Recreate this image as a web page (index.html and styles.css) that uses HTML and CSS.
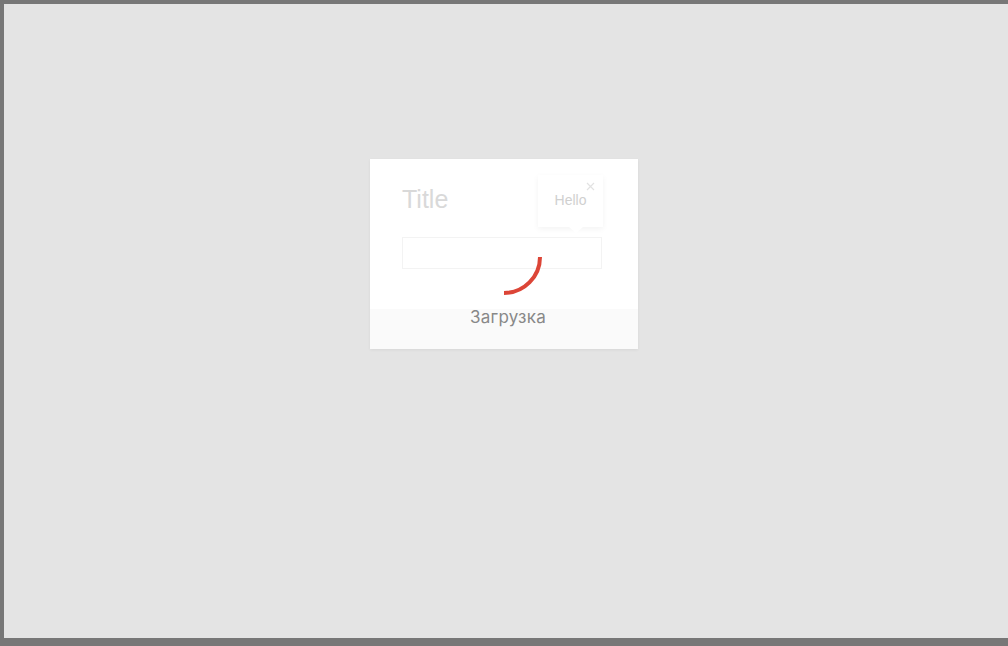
FILE: index.html
```html
<!DOCTYPE html>
<html>
<head>
<meta charset="utf-8">
<link rel="stylesheet" href="styles.css">
</head>
<body>
<div class="frame">
  <div class="modal">
    <div class="modal-body">
      <div class="title">Title</div>
      <div class="input"></div>
    </div>
    <div class="modal-footer"></div>
    <div class="tooltip">
      <span class="tooltip-text">Hello</span>
      <svg class="tooltip-close" width="9" height="9" viewBox="0 0 9 9"><path d="M1 1L8 8M8 1L1 8" stroke="#e2e2e2" stroke-width="1.2" fill="none"/></svg>
      <span class="tooltip-arrow"></span>
    </div>
    <div class="loader">
      <svg class="spinner" width="80" height="80" viewBox="0 0 80 80"><path d="M76 40A36 36 0 0 1 40 76" stroke="#dc4537" stroke-width="4" fill="none"/></svg>
      <div class="loader-text">Загрузка</div>
    </div>
  </div>
</div>
</body>
</html>
```
FILE: styles.css
```css
html, body {
  margin: 0;
  padding: 0;
}
body {
  font-family: "Liberation Sans", Arial, sans-serif;
}
.frame {
  box-sizing: border-box;
  height: 646px;
  width: 1008px;
  background: #e4e4e4;
  border-top: 4px solid #777777;
  border-left: 4px solid #777777;
  border-bottom: 8px solid #777777;
  padding: 155px 0 0 366px;
}
.modal {
  position: relative;
  width: 268px;
  height: 190px;
  background: #ffffff;
  box-shadow: 0 1px 3px rgba(0,0,0,0.06);
  display: flex;
  flex-direction: column;
}
.modal-body {
  flex: 1;
  padding: 25px 36px 0 32px;
}
.title {
  font-size: 25px;
  line-height: 30px;
  color: #d9d9d9;
  height: 30px;
}
.input {
  margin-top: 23px;
  width: 198px;
  height: 30px;
  border: 1px solid #f3f3f3;
}
.modal-footer {
  height: 40px;
  background: #fafafa;
}
.tooltip {
  position: absolute;
  left: 168px;
  top: 16px;
  width: 65px;
  height: 52px;
  background: #ffffff;
  box-shadow: 0 2px 6px rgba(0,0,0,0.05);
  display: flex;
  align-items: center;
  justify-content: center;
}
.tooltip-text {
  font-size: 14px;
  color: #d0d0d0;
  margin-top: -2px;
}
.tooltip-close {
  position: absolute;
  right: 8px;
  top: 7px;
}
.tooltip-arrow {
  position: absolute;
  left: 31px;
  bottom: -6px;
  width: 0;
  height: 0;
  border-left: 7px solid transparent;
  border-right: 7px solid transparent;
  border-top: 6px solid #ffffff;
}
.loader {
  position: absolute;
  left: 0;
  right: 0;
  top: 58px;
  display: flex;
  flex-direction: column;
  align-items: center;
}
.loader-text {
  margin-top: 10px;
  margin-left: 8px;
  font-family: Inter, "Noto Sans", sans-serif;
  font-size: 17px;
  line-height: 21px;
  letter-spacing: 0.2px;
  color: #888888;
}
```
